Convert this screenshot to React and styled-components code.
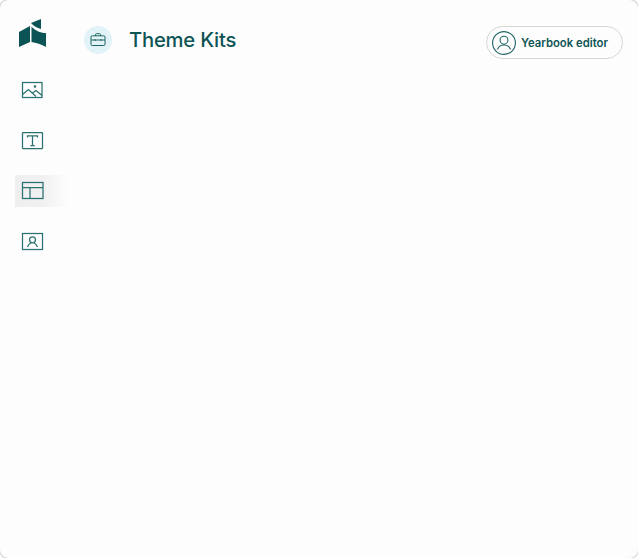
import React from 'react'
import styled, { createGlobalStyle } from 'styled-components'

const GlobalStyle = createGlobalStyle`
  html, body {
    margin: 0;
    padding: 0;
    width: 638px;
    height: 558px;
    overflow: hidden;
    background: #fff;
  }
  * { box-sizing: border-box; }
`

const Frame = styled.div`
  width: 640px;
  height: 560px;
  margin: -1px;
  display: flex;
  background: #fdfdfd;
  border: 1px solid #c8c8c8;
  border-radius: 9px;
  font-family: Inter, "Noto Sans", sans-serif;
  color: #0d5455;
`

const Sidebar = styled.nav`
  width: 68px;
  flex: none;
  display: flex;
  flex-direction: column;
  padding: 18px 0 0 15px;
`

const Logo = styled.svg`
  display: block;
  width: 30px;
  height: 30px;
  margin: 0 0 27px 3px;
`

const NavItem = styled.div`
  width: 53px;
  height: 32px;
  margin-bottom: 18.2px;
  padding: 0 0 2px 5px;
  display: flex;
  align-items: center;
  background: ${props => props.$active
    ? 'linear-gradient(90deg, #efefef 0%, #f1f1f1 55%, #fdfdfd 100%)'
    : 'transparent'};
`

const NavIcon = styled.svg`
  display: block;
  width: 24px;
  height: 20px;
  fill: none;
  stroke: #2c7070;
  stroke-width: 1.25;
`

const Main = styled.main`
  flex: 1;
  min-width: 0;
`

const Header = styled.header`
  display: flex;
  align-items: flex-start;
  justify-content: space-between;
  padding: 26px 15px 0 16px;
`

const TitleGroup = styled.div`
  display: flex;
  align-items: center;
  gap: 17px;
  height: 28px;
`

const IconBadge = styled.div`
  width: 28px;
  height: 28px;
  border-radius: 50%;
  background: #e1f3f7;
  display: flex;
  align-items: center;
  justify-content: center;
`

const Title = styled.h1`
  margin: 0 0 2px;
  font-size: 20.2px;
  font-weight: 500;
  letter-spacing: -0.2px;
  color: #0d5455;
`

const EditorButton = styled.button`
  width: 137px;
  height: 33px;
  padding: 0 0 0 5px;
  display: flex;
  align-items: center;
  gap: 5px;
  background: #fdfdfd;
  border: 1px solid #d4d6d6;
  border-radius: 17px;
  font-family: inherit;
  font-size: 11.3px;
  font-weight: 600;
  color: #0d5455;
`

const AvatarIcon = styled.svg`
  display: block;
  width: 24px;
  height: 24px;
  flex: none;
  fill: none;
  stroke: #1f6465;
  stroke-width: 1.1;
`

const items = [
  {
    id: 'image',
    shape: (
      <>
        <rect x="2.5" y="2.5" width="19.5" height="15" />
        <path d="M2.5 14.5 L8.5 9.5 L16 16.5 M12.5 13 L16 10.5 L22 15.5" />
        <circle cx="15" cy="6.5" r="0.7" />
      </>
    )
  },
  {
    id: 'text',
    shape: (
      <>
        <rect x="2.5" y="2.5" width="20" height="16" rx="0.5" />
        <path d="M7.5 7.5 V5.8 H17.5 V7.5 M12.5 5.8 V15.5 M10.3 15.5 H14.7" />
      </>
    )
  },
  {
    id: 'layout',
    active: true,
    shape: (
      <>
        <rect x="2.5" y="2.5" width="20.5" height="16" />
        <path d="M2.5 7.5 H23 M10 7.5 V18.5" />
      </>
    )
  },
  {
    id: 'person',
    shape: (
      <>
        <rect x="2.5" y="2.5" width="20" height="16" />
        <circle cx="12.5" cy="8.8" r="3" />
        <path d="M7.5 16 C8.5 13.5 10 12.4 11 12 M17.5 16 C16.5 13.5 15 12.4 14 12" />
      </>
    )
  }
]

function App() {
  return (
    <>
      <GlobalStyle />
      <Frame>
        <Sidebar>
          <Logo viewBox="0 0 30 30">
            <path d="M1 14 L12 8 V24 L1 29 Z" fill="#0b5354" />
            <path d="M13.5 8.5 V24 C18 24.5 23.5 26.5 28 29 V15 C22 15 17 12.5 13.5 8.5 Z" fill="#0b5354" />
            <path d="M13 5 L23 1 V11 C19 10 15.5 8 13 5 Z" fill="#0b5354" />
          </Logo>
          {items.map(item => (
            <NavItem key={item.id} $active={item.active}>
              <NavIcon viewBox="0 0 24 20">{item.shape}</NavIcon>
            </NavItem>
          ))}
        </Sidebar>
        <Main>
          <Header>
            <TitleGroup>
              <IconBadge>
                <svg width="16" height="16" viewBox="0 0 16 16" fill="none" stroke="#1f6465" strokeWidth="1">
                  <rect x="1" y="3.8" width="14" height="9.7" rx="1.2" />
                  <path d="M5.5 3.8 V2.5 C5.5 2 5.9 1.7 6.4 1.7 H9.6 C10.1 1.7 10.5 2 10.5 2.5 V3.8 M1 8 H15 M5 7 V9 M11 7 V9" />
                </svg>
              </IconBadge>
              <Title>Theme Kits</Title>
            </TitleGroup>
            <EditorButton>
              <AvatarIcon viewBox="0 0 24 24">
                <circle cx="12" cy="12" r="11.4" />
                <circle cx="12" cy="9.2" r="3.9" />
                <path d="M5.5 18.5 C6.5 15.5 8.8 14 12 14 C15.2 14 17.5 15.5 18.5 18.5" />
              </AvatarIcon>
              Yearbook editor
            </EditorButton>
          </Header>
        </Main>
      </Frame>
    </>
  )
}

export default App
